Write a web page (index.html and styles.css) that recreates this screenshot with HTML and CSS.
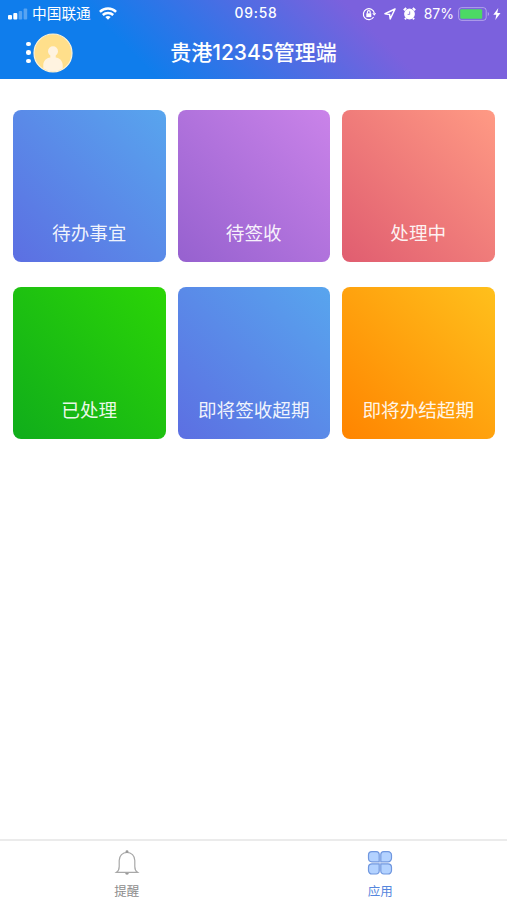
FILE: index.html
```html
<!DOCTYPE html>
<html lang="zh-CN">
<head>
  <meta charset="UTF-8">
  <meta name="viewport" content="width=device-width, initial-scale=1">
  <title>贵港12345管理端</title>
  <link rel="stylesheet" href="styles.css">
</head>
<body>

  <header class="header">
    <div class="status">
      <div class="status-left">
        <svg class="signal" width="20" height="12" viewBox="0 0 20 12" fill="#fff">
          <rect x="0" y="7" width="4" height="4.5" rx="1"/>
          <rect x="5.3" y="5" width="4" height="6.5" rx="1"/>
          <rect x="10.6" y="3" width="3.6" height="8.5" rx="1" opacity=".3"/>
          <rect x="15.6" y="0.5" width="3.6" height="11" rx="1" opacity=".3"/>
        </svg>
        <span class="carrier">中国联通</span>
        <svg class="wifi" width="18" height="13" viewBox="0 0 18 13" fill="none" stroke="#fff" stroke-width="2.5">
          <path d="M.9 4.8C5.4 .5 12.600 .5 17.100 4.8"/>
          <path d="M3.800 8c2.900-2.700 7.500-2.700 10.400 0"/>
          <path d="M6.300 10c1.500-1.300 3.900-1.300 5.400 0L9 12.800z" fill="#fff" stroke="none"/>
        </svg>
      </div>
      <div class="time">09:58</div>
      <div class="status-right">
        <svg class="lock" width="14" height="14" viewBox="0 0 14 14" fill="none" stroke="#fff" stroke-width="1.2">
          <path d="M11.6 10A5.5 5.5 0 1 1 12.3 6.2"/>
          <path d="M10.2 6.2h4l-2 2.5z" fill="#fff" stroke="none"/>
          <rect x="4.3" y="6.3" width="5" height="3.8" fill="#fff" stroke="none"/>
          <path d="M5.4 6.5V5a1.4 1.4 0 0 1 2.8 0v1.5"/>
        </svg>
        <svg class="arrow" width="12" height="12" viewBox="0 0 12 12" fill="none" stroke="#fff" stroke-width="1.5" stroke-linejoin="round">
          <path d="M11 1L1 5.8l4.6.6.6 4.6z"/>
        </svg>
        <svg class="alarm" width="13" height="13" viewBox="0 0 13 13">
          <circle cx="6.5" cy="7" r="5.4" fill="#fff"/>
          <path d="M.8 3.2L3.2 1M12.2 3.2L9.8 1M3 11l-1 1.4M10 11l1 1.4" stroke="#fff" stroke-width="2"/>
          <path d="M6.7 4.4v3H4.6" fill="none" stroke="#7b61dd" stroke-width=".8"/>
        </svg>
        <span class="percent">87%</span>
        <svg class="battery" width="32" height="14" viewBox="0 0 32 14">
          <rect x=".6" y=".6" width="27.6" height="12.8" rx="3" fill="none" stroke="#fff" stroke-opacity=".4"/>
          <rect x="2.2" y="2.3" width="22" height="9.4" rx="1.2" fill="#4cd964"/>
          <path d="M29.8 5c1.5.6 1.5 3.4 0 4z" fill="#fff" opacity=".5"/>
        </svg>
        <svg class="bolt" width="8" height="12" viewBox="0 0 8 12" fill="#fff">
          <path d="M5.3 0L.3 6.8h3L2.3 12l5.2-7H4.3z"/>
        </svg>
      </div>
    </div>
    <div class="navbar">
      <div class="user">
        <div class="dots"><i></i><i></i><i></i></div>
        <svg class="avatar" width="40" height="40" viewBox="0 0 40 40">
          <circle cx="20" cy="20" r="19" fill="#ffdf8b" stroke="#fdf3d8" stroke-width="1.2"/>
          <circle cx="20" cy="18.2" r="5" fill="#fff3e0"/>
          <path d="M10.3 35.4V32c0-4.2 3.2-7.2 7-7.6v-3h5.4v3c3.8.4 7 3.4 7 7.6v3.4a18.4 18.4 0 0 1-19.4 0z" fill="#fff3e0"/>
        </svg>
      </div>
      <h1 class="title">贵港12345管理端</h1>
    </div>
  </header>

  <main class="cards">
    <a class="card blue">待办事宜</a>
    <a class="card purple">待签收</a>
    <a class="card red">处理中</a>
    <a class="card green">已处理</a>
    <a class="card blue">即将签收超期</a>
    <a class="card orange">即将办结超期</a>
  </main>

  <nav class="tabbar">
    <a class="tab">
      <svg width="26" height="28" viewBox="0 0 26 28" fill="none" stroke="#a8a8a8" stroke-width="1.2">
        <path d="M2.5 23.3c2.5-1.6 2.700-3.2 2.700-5.8v-6c0-4.6 3.5-8.200 7.800-8.200s7.800 3.600 7.800 8.200v6c0 2.600.2 4.200 2.700 5.800z"/>
        <circle cx="13" cy="2.6" r="1.4" fill="#999" stroke="none"/>
        <path d="M11.2 24h3.6a1.8 1.8 0 0 1-3.6 0z" fill="#999" stroke="none"/>
      </svg>
      <span>提醒</span>
    </a>
    <a class="tab active">
      <svg width="26" height="28" viewBox="0 0 26 28" fill="#b3d2ff" stroke="#7097df" stroke-width="1.2">
        <path d="M5 2.6h4.200a3 3 0 0 1 3 3v7.200H5a3.500 3.500 0 0 1-3.500-3.500V6.100A3.500 3.500 0 0 1 5 2.600z"/>
        <path d="M16.800 2.600H21a3.500 3.500 0 0 1 3.500 3.500v3.200a3.500 3.500 0 0 1-3.500 3.500h-7.200V5.600a3 3 0 0 1 3-3z"/>
        <path d="M5 14.800h7.200V22a3 3 0 0 1-3 3H5a3.500 3.500 0 0 1-3.500-3.500v-3.200A3.500 3.500 0 0 1 5 14.800z"/>
        <path d="M13.800 14.800H21a3.500 3.500 0 0 1 3.500 3.500v3.200A3.500 3.500 0 0 1 21 25h-4.200a3 3 0 0 1-3-3z"/>
      </svg>
      <span>应用</span>
    </a>
  </nav>

</body>
</html>
```
FILE: styles.css
```css
* { box-sizing: border-box; }
body {
  margin: 0;
  height: 100vh;
  display: flex;
  flex-direction: column;
  background: #fff;
  font-family: Inter, "Noto Sans CJK SC", sans-serif;
  overflow: hidden;
}
svg { display: block; flex: none; }

.header {
  height: 79px;
  color: #fff;
  background: linear-gradient(45deg, #0f7dec 27%, #7b61dd 72%);
}
.status {
  display: grid;
  grid-template-columns: 1fr auto 1fr;
  align-items: center;
  height: 27px;
  padding: 0 6px 0 8px;
  font-size: 14px;
  line-height: 27px;
}
.status-left, .status-right {
  display: flex;
  align-items: center;
}
.status-right { justify-content: flex-end; }
.carrier { margin: 0 8px 0 4px; padding-top: 2px; font-size: 14.7px; line-height: 25px; }
.time { padding-left: 3px; font-size: 13.8px; font-weight: 500; letter-spacing: 0.8px; }
.arrow { margin: 0 7px 0 8px; }
.percent { margin: 0 4px 0 8px; font-size: 14px; }
.bolt { margin-left: 3px; }

.navbar {
  display: grid;
  grid-template-columns: 1fr auto 1fr;
  align-items: center;
  height: 51px;
}
.user {
  display: flex;
  align-items: center;
  padding-left: 26px;
}
.dots { display: grid; gap: 4px; margin-right: 2px; }
.dots i {
  width: 4.5px;
  height: 4.5px;
  border-radius: 50%;
  background: #fff;
}
.title { margin: 0; padding-top: 1px; font-size: 21px; font-weight: 500; line-height: 30px; }

.cards {
  flex: 1;
  display: grid;
  grid-template-columns: repeat(3, 1fr);
  align-content: start;
  gap: 24.5px 12px;
  padding: 31px 12.5px 0 13px;
}
.card {
  display: flex;
  align-items: flex-end;
  justify-content: center;
  height: 152px;
  padding-bottom: 15px;
  border-radius: 8px;
  color: rgba(255, 255, 255, 0.92);
  font-size: 18.6px;
  line-height: 28px;
}
.blue { background: linear-gradient(45deg, #5c6fe2, #58a5ee); }
.purple { background: linear-gradient(45deg, #9661cf, #ca83e9); }
.red { background: linear-gradient(45deg, #e05d70, #ff9a84); }
.green { background: linear-gradient(45deg, #10ad1b, #2bd506); }
.orange { background: linear-gradient(45deg, #ff8400, #ffc01c); }

.tabbar {
  display: flex;
  height: 61px;
  border-top: 2px solid #ebebeb;
}
.tab {
  flex: 1;
  display: flex;
  flex-direction: column;
  align-items: center;
  padding-top: 8px;
  color: #8c8c8c;
  font-size: 12.5px;
  line-height: 18px;
}
.tab span { margin-top: 6px; }
.active { color: #5586dd; }
```
